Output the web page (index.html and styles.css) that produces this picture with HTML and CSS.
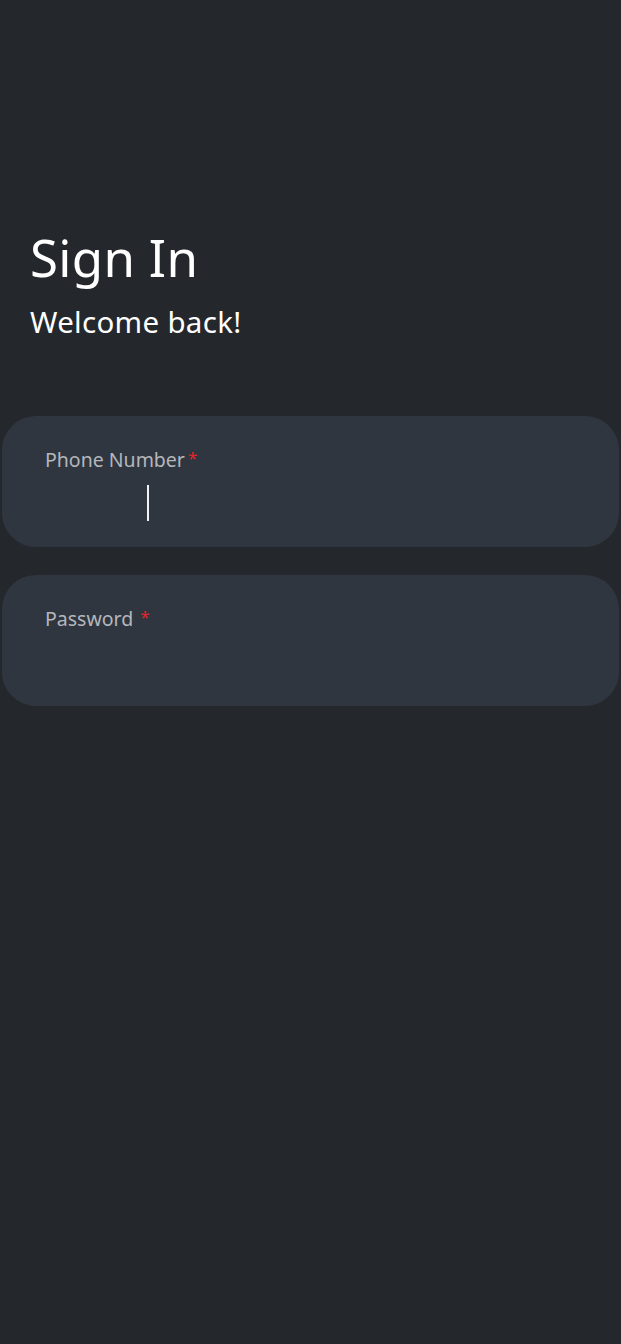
FILE: index.html
```html
<!DOCTYPE html>
<html>
<head>
<meta charset="utf-8">
<link rel="stylesheet" href="styles.css">
</head>
<body>
<main class="page">
  <header class="head">
    <h1 class="title">Sign In</h1>
    <p class="subtitle">Welcome back!</p>
  </header>
  <form class="form">
    <div class="field">
      <label class="label">Phone Number<span class="req">*</span></label>
      <div class="input"><span class="caret"></span></div>
    </div>
    <div class="field">
      <label class="label">Password <span class="req req-gap">*</span></label>
      <div class="input"></div>
    </div>
  </form>
</main>
</body>
</html>
```
FILE: styles.css
```css
html, body {
  margin: 0;
  padding: 0;
  background: #24282d;
}
body {
  font-family: "Noto Sans", "Open Sans", sans-serif;
  color: #ffffff;
  min-height: 1344px;
}
.page {
  display: flex;
  flex-direction: column;
}
.head {
  padding: 224px 30px 0 30px;
}
.title {
  margin: 0;
  font-weight: 400;
  font-size: 51px;
  line-height: 66px;
  letter-spacing: 0.3px;
}
.subtitle {
  margin: 13px 0 0 0;
  font-size: 29.5px;
  line-height: 38px;
  letter-spacing: 0.3px;
}
.form {
  display: flex;
  flex-direction: column;
  gap: 28px;
  margin: 75px 2px 0 2px;
}
.field {
  background: #303640;
  border-radius: 34px;
  height: 131px;
  box-sizing: border-box;
  padding: 31px 43px 0 43px;
  display: flex;
  flex-direction: column;
}
.label {
  font-size: 19.5px;
  line-height: 26px;
  color: #b4b7bb;
}
.req {
  color: #e0252b;
  margin-left: 3px;
  font-size: 17px;
  position: relative;
  top: -3px;
}
.req-gap {
  margin-left: 2px;
}
.input {
  height: 40px;
  margin-top: 10px;
  position: relative;
}
.caret {
  position: absolute;
  left: 102px;
  top: 1px;
  width: 2px;
  height: 36px;
  background: #f2f2f2;
}
```
